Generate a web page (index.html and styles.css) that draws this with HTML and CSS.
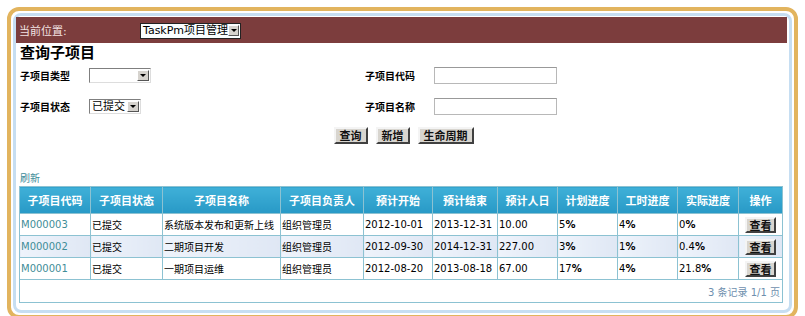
FILE: index.html
```html
<!DOCTYPE html>
<html lang="zh-CN">
<head>
  <meta charset="UTF-8" />
  <title>查询子项目</title>
  <link rel="stylesheet" href="styles.css">
</head>
<body>
  <div class="frame">
    <div class="inner">
      <div class="topbar">
        <span class="where">当前位置:</span>
        <span class="combo combo-sys">TaskPm项目管理<span class="arrow"></span></span>
      </div>
      <h2>查询子项目</h2>
      <div class="query">
        <label>子项目类型</label>
        <span class="combo combo-type"><span class="arrow"></span></span>
        <label>子项目代码</label>
        <input type="text" class="field" />
        <label>子项目状态</label>
        <span class="combo combo-state">已提交<span class="arrow"></span></span>
        <label>子项目名称</label>
        <input type="text" class="field" />
      </div>
      <div class="actions">
        <button class="btn">查询</button>
        <button class="btn">新增</button>
        <button class="btn">生命周期</button>
      </div>
      <a class="refresh" href="#">刷新</a>
      <table class="list">
        <colgroup>
          <col style="width:71px"><col style="width:72px"><col style="width:118px"><col style="width:83px">
          <col style="width:69px"><col style="width:65px"><col style="width:60px"><col style="width:60px">
          <col style="width:60px"><col style="width:61px"><col style="width:44px">
        </colgroup>
        <thead>
          <tr>
            <th>子项目代码</th><th>子项目状态</th><th>子项目名称</th><th>子项目负责人</th>
            <th>预计开始</th><th>预计结束</th><th>预计人日</th><th>计划进度</th>
            <th>工时进度</th><th>实际进度</th><th>操作</th>
          </tr>
        </thead>
        <tbody>
          <tr>
            <td class="code">M000003</td><td>已提交</td><td>系统版本发布和更新上线</td><td>组织管理员</td>
            <td>2012-10-01</td><td>2013-12-31</td><td>10.00</td><td>5<b>%</b></td>
            <td>4<b>%</b></td><td>0<b>%</b></td><td class="op"><button class="view">查看</button></td>
          </tr>
          <tr class="alt">
            <td class="code">M000002</td><td>已提交</td><td>二期项目开发</td><td>组织管理员</td>
            <td>2012-09-30</td><td>2014-12-31</td><td>227.00</td><td>3<b>%</b></td>
            <td>1<b>%</b></td><td>0.4<b>%</b></td><td class="op"><button class="view">查看</button></td>
          </tr>
          <tr>
            <td class="code">M000001</td><td>已提交</td><td>一期项目运维</td><td>组织管理员</td>
            <td>2012-08-20</td><td>2013-08-18</td><td>67.00</td><td>17<b>%</b></td>
            <td>4<b>%</b></td><td>21.8<b>%</b></td><td class="op"><button class="view">查看</button></td>
          </tr>
          <tr class="foot">
            <td colspan="11">3 条记录 1/1 页</td>
          </tr>
        </tbody>
      </table>
    </div>
  </div>
</body>
</html>
```

FILE: styles.css
```css
body {
  margin: 0;
  background: #fff;
  font-family: "DejaVu Sans", "Noto Sans CJK SC", sans-serif;
  font-size: 10px;
  color: #000;
}
.frame {
  margin: 7px 7px 0 7px;
  border: 4px solid #e2b45e;
  border-radius: 12px;
  padding: 2px;
  background: #fff;
}
.inner {
  border: 3px solid #c6def2;
  border-radius: 8px;
  padding: 1px 2px 7px 0;
}
.topbar {
  background: #7c3d3d;
  height: 26px;
  display: flex;
  align-items: center;
  padding-left: 3px;
}
.where {
  color: #f2e2e2;
  font-size: 11px;
  width: 121px;
}
.combo {
  display: inline-flex;
  align-items: center;
  box-sizing: border-box;
  height: 15px;
  border: 1px solid #7f7f7f;
  border-right-color: #ddd;
  border-bottom-color: #ddd;
  background: #fff;
  padding-left: 2px;
  font-size: 11px;
  line-height: 13px;
  white-space: nowrap;
}
.combo-sys {
  width: 101px;
  height: 16px;
  border: 1px solid #222;
  background: #fafeff;
  margin-top: 1px;
}
.combo-type { width: 62px; }
.combo-state { width: 52px; }
.arrow {
  width: 12px;
  height: 11px;
  margin-left: auto;
  margin-right: 1px;
  box-sizing: border-box;
  background: #d6d3ce;
  border: 1px solid;
  border-color: #fff #555 #555 #fff;
  position: relative;
}
.arrow::after {
  content: "";
  position: absolute;
  left: 2px;
  top: 3px;
  border-left: 3px solid transparent;
  border-right: 3px solid transparent;
  border-top: 3px solid #000;
}
h2 {
  margin: 0;
  height: 20px;
  line-height: 20px;
  padding-left: 4px;
  font-size: 15px;
  font-weight: bold;
}
.query {
  display: grid;
  grid-template-columns: 69px 276px 69px 124px;
  grid-template-rows: 25px 37px;
  align-items: center;
  padding-left: 4px;
}
.query label {
  font-weight: bold;
  font-size: 10px;
}
.field {
  box-sizing: border-box;
  width: 123px;
  height: 17px;
  margin: 0;
  border: 1px solid #b8b8b8;
  border-top-color: #999;
  padding: 0;
}
.actions {
  display: flex;
  justify-content: center;
  gap: 8px;
  padding-left: 4px;
  margin-top: 2px;
}
.btn, .view {
  box-sizing: border-box;
  height: 17px;
  padding: 0 4px;
  font-family: "Noto Sans CJK SC", sans-serif;
  font-size: 11px;
  font-weight: bold;
  line-height: 13px;
  background: #d8d5cf;
  color: #111;
  border: 2px solid;
  border-color: #f4f4f4 #404040 #404040 #f4f4f4;
  cursor: pointer;
}
.refresh {
  display: block;
  margin-top: 28px;
  padding-left: 4px;
  height: 14px;
  line-height: 14px;
  color: #3c8c9a;
  font-size: 10px;
  text-decoration: none;
}
.list {
  margin-left: 3px;
  width: 763px;
  table-layout: fixed;
  border-collapse: collapse;
}
.list th, .list td {
  border: 1px solid #8cc2d2;
  white-space: nowrap;
  overflow: hidden;
}
.list th {
  height: 24px;
  background: linear-gradient(#3fb0d8, #2899c6);
  color: #fff;
  font-family: "Noto Sans CJK SC", sans-serif;
  font-size: 11px;
  font-weight: bold;
}
.list td {
  height: 21px;
  padding: 0 0 0 1px;
  font-size: 10px;
}
.list td b {
  font-weight: bold;
}
.list tr.alt td {
  background: linear-gradient(90deg, #eef3fb, #dfe7f4);
}
.list td.code {
  color: #3f8d98;
}
.list td.op {
  text-align: center;
  padding: 0;
}
.view {
  width: 31px;
  height: 16px;
  padding: 0;
  vertical-align: middle;
}
.list tr.foot td {
  height: 22px;
  text-align: right;
  padding-right: 2px;
  color: #6e8fae;
  font-size: 10px;
}
```
